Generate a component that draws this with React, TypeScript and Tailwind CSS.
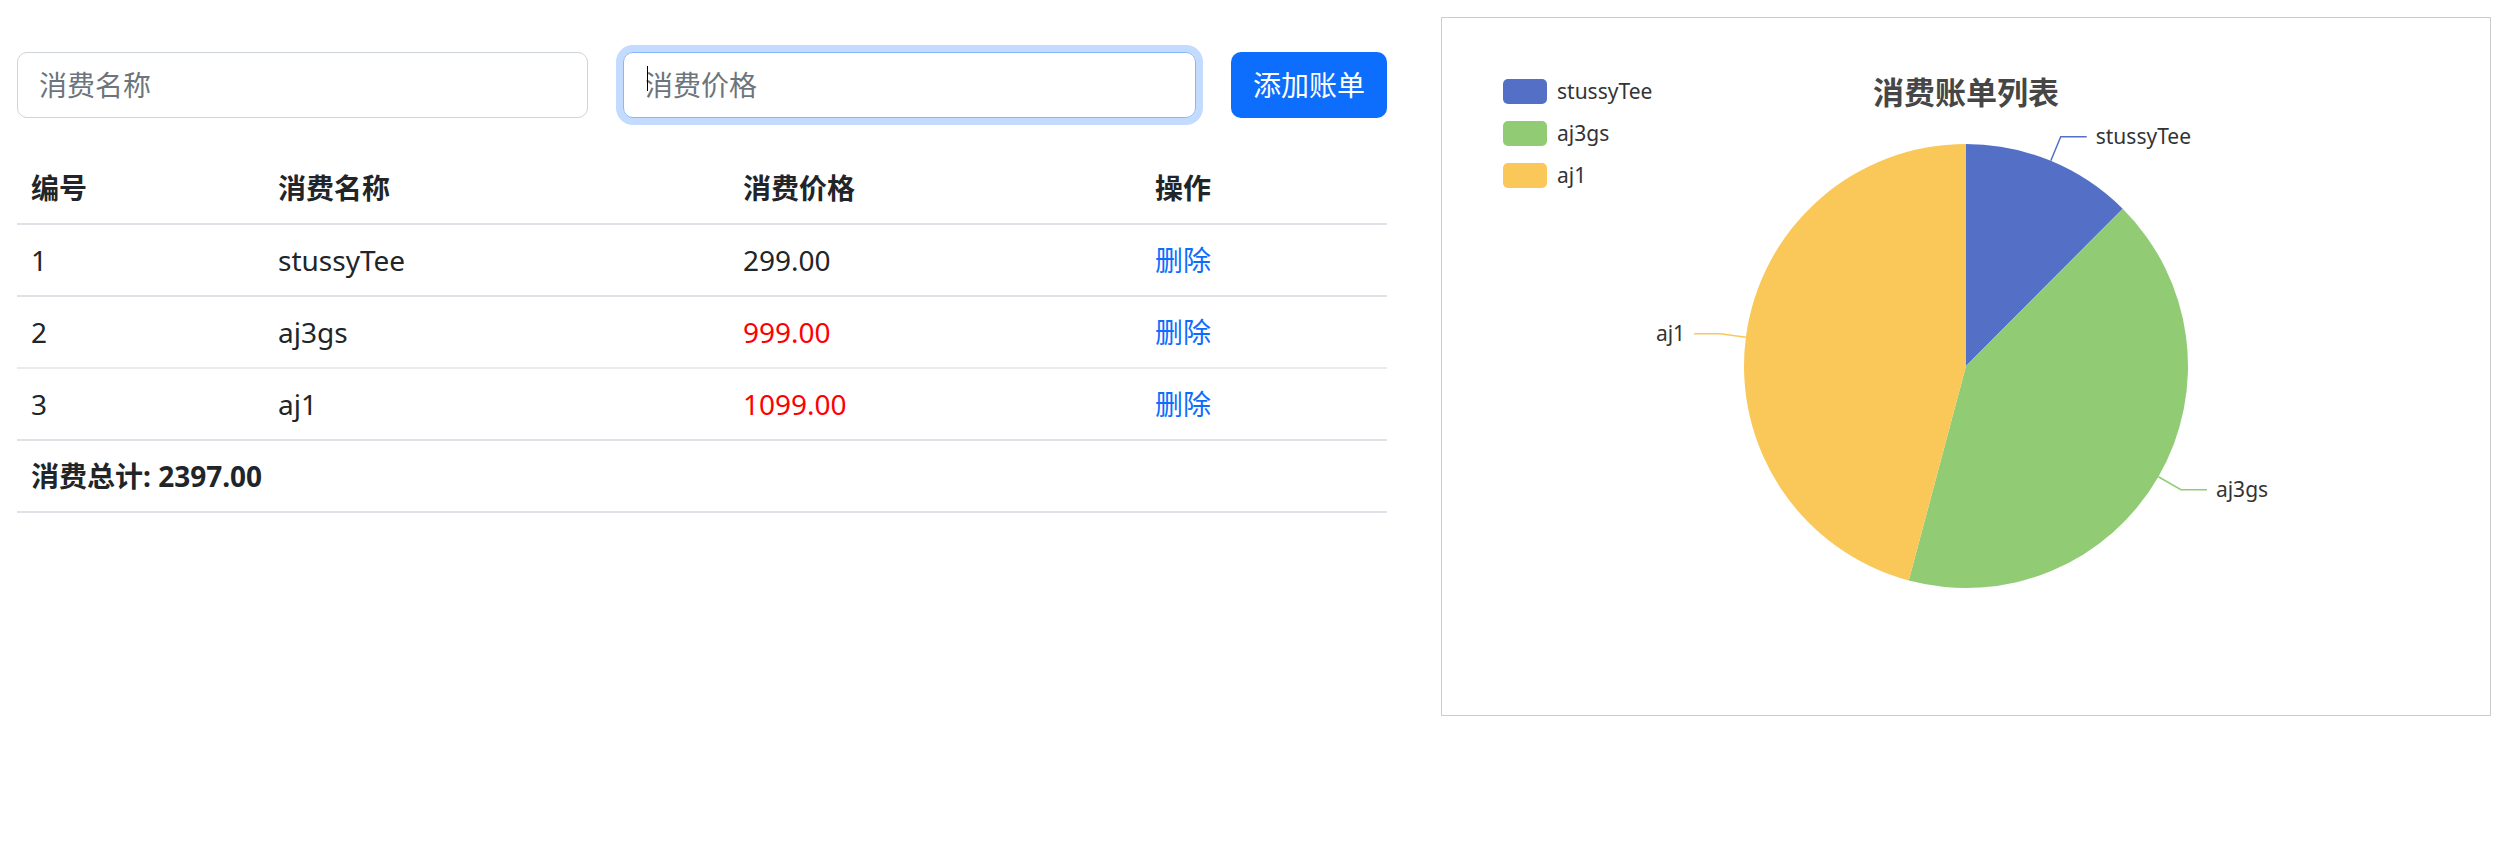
const font = '"Noto Sans", "Noto Sans CJK SC", sans-serif';

type Bill = { id: number; name: string; price: number };

const bills: Bill[] = [
  { id: 1, name: "stussyTee", price: 299 },
  { id: 2, name: "aj3gs", price: 999 },
  { id: 3, name: "aj1", price: 1099 },
];

const colors = ["#5470c6", "#91cc75", "#fac858"];

function PieChart() {
  const cx = 524;
  const cy = 348;
  const r = 222;
  const total = bills.reduce((s, b) => s + b.price, 0);
  const pt = (a: number, rad: number) => [cx + rad * Math.sin(a), cy - rad * Math.cos(a)];

  let start = 0;
  const slices = bills.map((b, i) => {
    const sweep = (b.price / total) * Math.PI * 2;
    const end = start + sweep;
    const mid = start + sweep / 2;
    const [x1, y1] = pt(start, r);
    const [x2, y2] = pt(end, r);
    const large = sweep > Math.PI ? 1 : 0;
    const d = `M${cx},${cy} L${x1},${y1} A${r},${r} 0 ${large} 1 ${x2},${y2} Z`;
    const [ex, ey] = pt(mid, r);
    const [ox, oy] = pt(mid, r + 26);
    const dir = Math.sin(mid) >= 0 ? 1 : -1;
    const hx = ox + dir * 26;
    start = end;
    return { d, color: colors[i], name: b.name, line: `M${ex},${ey} L${ox},${oy} L${hx},${oy}`, tx: hx + dir * 9, ty: oy, dir };
  });

  return (
    <svg width="1048" height="697" viewBox="0 0 1048 697" style={{ fontFamily: font }}>
      <text x="524" y="74" textAnchor="middle" dominantBaseline="central" fontSize="31" fontWeight="700" fill="#464646">
        消费账单列表
      </text>
      {bills.map((b, i) => (
        <g key={b.id}>
          <rect x="61" y={61 + i * 42} width="44" height="25" rx="5" fill={colors[i]} />
          <text x="115" y={73 + i * 42} dominantBaseline="central" fontSize="21" fill="#333">
            {b.name}
          </text>
        </g>
      ))}
      {slices.map((s) => (
        <path key={s.name} d={s.d} fill={s.color} />
      ))}
      {slices.map((s) => (
        <g key={s.name + "-label"}>
          <path d={s.line} stroke={s.color} strokeWidth="1.5" fill="none" />
          <text
            x={s.tx}
            y={s.ty - 1}
            textAnchor={s.dir > 0 ? "start" : "end"}
            dominantBaseline="central"
            fontSize="21"
            fill="#333"
          >
            {s.name}
          </text>
        </g>
      ))}
    </svg>
  );
}

export default function App() {
  const total = bills.reduce((s, b) => s + b.price, 0);
  return (
    <div className="flex items-start bg-white min-h-[848px] text-[#212529]" style={{ fontFamily: font }}>
      <div className="ml-[17px] mt-[52px] w-[1370px]">
        <div className="flex h-[66px]">
          <input
            className="w-[571px] h-[66px] rounded-[10px] border border-[#ced4da] px-[21px] text-[28px] outline-none placeholder:text-[#6c757d]"
            placeholder="消费名称"
          />
          <div className="relative ml-[35px] w-[573px] h-[66px]">
            <input
              className="w-full h-full rounded-[10px] border border-[#86b7fe] px-[21px] text-[28px] outline-none shadow-[0_0_0_7px_rgba(13,110,253,0.25)] placeholder:text-[#6c757d]"
              placeholder="消费价格"
            />
            <span className="absolute left-[24px] top-[14px] h-[25px] w-[1px] bg-black" />
          </div>
          <button className="ml-[35px] w-[156px] h-[66px] rounded-[10px] bg-[#0d6efd] text-white text-[28px]">
            添加账单
          </button>
        </div>

        <table className="mt-[35px] w-full border-collapse text-[28px] leading-[42px]">
          <thead>
            <tr className="border-b-2 border-[#dee2e6] text-left">
              <th className="w-[247px] p-[14px] font-bold">编号</th>
              <th className="w-[465px] p-[14px] font-bold">消费名称</th>
              <th className="w-[412px] p-[14px] font-bold">消费价格</th>
              <th className="p-[14px] font-bold">操作</th>
            </tr>
          </thead>
          <tbody>
            {bills.map((b, i) => (
              <tr key={b.id} className={i === 1 ? "border-b-2 border-[#e9ecef]" : "border-b-2 border-[#dee2e6]"}>
                <td className="p-[14px]">{b.id}</td>
                <td className="p-[14px]">{b.name}</td>
                <td className={b.price > 500 ? "p-[14px] text-[#ff0000]" : "p-[14px]"}>{b.price.toFixed(2)}</td>
                <td className="p-[14px]">
                  <a className="text-[#0d6efd] cursor-pointer">删除</a>
                </td>
              </tr>
            ))}
            <tr className="border-b-2 border-[#dee2e6]">
              <td colSpan={4} className="p-[14px] font-bold">
                消费总计: {total.toFixed(2)}
              </td>
            </tr>
          </tbody>
        </table>
      </div>

      <div className="ml-[54px] mt-[17px] w-[1050px] h-[699px] border border-[#cccccc]">
        <PieChart />
      </div>
    </div>
  );
}
